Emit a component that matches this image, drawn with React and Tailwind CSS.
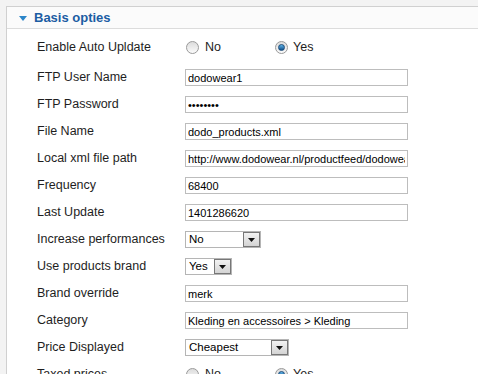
import React from "react";

const rows = [
  { label: "FTP User Name", type: "text", value: "dodowear1" },
  { label: "FTP Password", type: "password", value: "dodowear" },
  { label: "File Name", type: "text", value: "dodo_products.xml" },
  { label: "Local xml file path", type: "text", value: "http://www.dodowear.nl/productfeed/dodowear.xml" },
  { label: "Frequency", type: "text", value: "68400" },
  { label: "Last Update", type: "text", value: "1401286620" },
  { label: "Increase performances", type: "select", value: "No", width: "w-[76px]" },
  { label: "Use products brand", type: "select", value: "Yes", width: "w-[47px]" },
  { label: "Brand override", type: "text", value: "merk" },
  { label: "Category", type: "text", value: "Kleding en accessoires > Kleding" },
  { label: "Price Displayed", type: "select", value: "Cheapest", width: "w-[104px]" },
  { label: "Taxed prices", type: "radio", value: "Yes" },
];

const Radio = ({ checked }) => (
  <span className="w-[13px] h-[13px] rounded-full border border-[#9a9a9a] bg-gradient-to-b from-[#dcdcdc] to-[#fbfbfb] flex items-center justify-center shrink-0">
    {checked && (
      <span className="w-[7px] h-[7px] rounded-full bg-gradient-to-b from-[#5fb4e8] to-[#10518c] border border-[#1a4a78]" />
    )}
  </span>
);

const RadioGroup = ({ value }) => (
  <div className="flex items-center">
    <label className="flex items-center w-[90px] gap-[6px] pl-[1px]">
      <Radio checked={value === "No"} />
      <span>No</span>
    </label>
    <label className="flex items-center gap-[5px]">
      <Radio checked={value === "Yes"} />
      <span>Yes</span>
    </label>
  </div>
);

const Select = ({ value, width }) => (
  <div className={`${width} h-[17px] border border-[#b5b5b5] bg-white flex items-center justify-between text-[11.5px] text-black`}>
    <span className="pl-[3px] leading-none">{value}</span>
    <span className="w-[17px] h-[15px] border border-[#777] bg-gradient-to-b from-[#f2f2f2] to-[#d4d4d4] flex items-center justify-center">
      <svg width="7" height="4" viewBox="0 0 7 4">
        <path d="M0 0H7L3.5 4Z" fill="#111" />
      </svg>
    </span>
  </div>
);

const Field = ({ row }) => {
  if (row.type === "radio") return <RadioGroup value={row.value} />;
  if (row.type === "select") return <Select value={row.value} width={row.width} />;
  return (
    <input
      readOnly
      type={row.type}
      value={row.value}
      className="w-[223px] h-[17px] border border-[#bdbdbd] px-[2px] text-[11px] text-black outline-none bg-white"
      style={{ fontFamily: "'Liberation Sans', Arial, sans-serif" }}
    />
  );
};

const App = () => {
  return (
    <div
      className="min-h-screen bg-[#f3f3f3] pt-[6px] pl-[6px] overflow-hidden text-[12.5px] text-[#1e1e1e]"
      style={{ fontFamily: "'Liberation Sans', Arial, sans-serif" }}
    >
      <div className="bg-white border-t border-l border-[#d0d0d0] min-h-[400px]">
        <div className="h-[22px] border-b border-[#dcdcdc] flex items-center pl-[12px] pt-[1px] gap-[7px] bg-[#fbfbfb]">
          <svg width="8" height="5" viewBox="0 0 8 5">
            <path d="M0 0H8L4 5Z" fill="#2c86c9" />
          </svg>
          <span className="text-[13px] font-bold text-[#1c5da3]">Basis opties</span>
        </div>
        <div className="pt-[5px] pl-[30px]">
          <div className="h-[27px] flex items-center">
            <div className="w-[148px]">Enable Auto Upldate</div>
            <RadioGroup value="Yes" />
          </div>
          <div className="mt-[3px]">
            {rows.map((row) => (
              <div key={row.label} className="h-[27px] flex items-center">
                <div className="w-[148px]">{row.label}</div>
                <Field row={row} />
              </div>
            ))}
          </div>
        </div>
      </div>
    </div>
  );
};

export default App;
